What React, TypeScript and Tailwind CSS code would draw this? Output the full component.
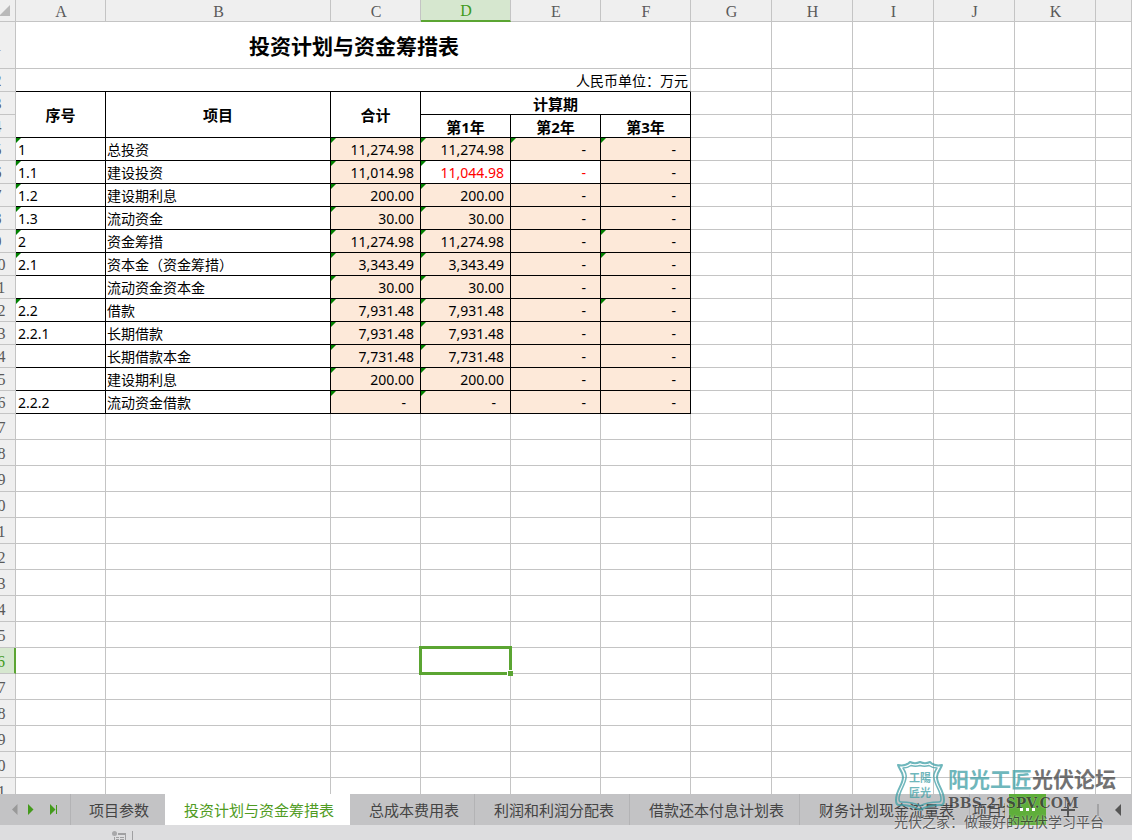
import { clsx } from 'clsx';

type Cell = {
  value: string;
  flagged?: boolean;
  plain?: boolean;
  red?: boolean;
};

type Line = {
  code: string;
  codeFlagged?: boolean;
  item: string;
  cells: Cell[];
};

const columns = ['A', 'B', 'C', 'D', 'E', 'F', 'G', 'H', 'I', 'J', 'K', ''];
const outerColumns = ['G', 'H', 'I', 'J', 'K', ''];

const flag = (value: string): Cell => ({ value, flagged: true });
const dash: Cell = { value: '-' };

const lines: Line[] = [
  { code: '1', codeFlagged: true, item: '总投资', cells: [flag('11,274.98'), flag('11,274.98'), flag('-'), flag('-')] },
  {
    code: '1.1',
    codeFlagged: true,
    item: '建设投资',
    cells: [
      flag('11,014.98'),
      { value: '11,044.98', flagged: true, plain: true, red: true },
      { value: '-', plain: true, red: true },
      dash,
    ],
  },
  { code: '1.2', codeFlagged: true, item: '建设期利息', cells: [flag('200.00'), flag('200.00'), dash, dash] },
  { code: '1.3', codeFlagged: true, item: '流动资金', cells: [flag('30.00'), flag('30.00'), dash, dash] },
  { code: '2', codeFlagged: true, item: '资金筹措', cells: [flag('11,274.98'), flag('11,274.98'), dash, flag('-')] },
  { code: '2.1', codeFlagged: true, item: '资本金（资金筹措）', cells: [flag('3,343.49'), flag('3,343.49'), dash, flag('-')] },
  { code: '', item: '流动资金资本金', cells: [flag('30.00'), flag('30.00'), dash, dash] },
  { code: '2.2', codeFlagged: true, item: '借款', cells: [flag('7,931.48'), flag('7,931.48'), dash, flag('-')] },
  { code: '2.2.1', item: '长期借款', cells: [flag('7,931.48'), flag('7,931.48'), dash, dash] },
  { code: '', item: '长期借款本金', cells: [flag('7,731.48'), flag('7,731.48'), dash, dash] },
  { code: '', item: '建设期利息', cells: [flag('200.00'), flag('200.00'), dash, dash] },
  { code: '2.2.2', item: '流动资金借款', cells: [flag('-'), flag('-'), dash, dash] },
];

const emptyRows = Array.from({ length: 15 }, (_, i) => i + 17);

const tabs = ['项目参数', '投资计划与资金筹措表', '总成本费用表', '利润和利润分配表', '借款还本付息计划表', '财务计划现金流量表'];

const gridCell = 'relative border-r border-b border-[#c4c4c4] p-0';
const boxCell = 'relative border-r border-b border-black p-0 pt-0.5';
const boxHead = 'border-r border-b border-black p-0 pt-px text-[15px] leading-5 font-bold';

const Flag = () => (
  <span className="absolute top-0 left-0 border-t-[5px] border-r-[5px] border-t-[#008000] border-r-transparent" />
);

const RowHeader = ({ n, active = false }: { n: number; active?: boolean }) => (
  <th
    scope="row"
    className={clsx(
      "border-b border-b-[#c4c4c4] p-0 pt-0.5 text-center font-['Liberation_Serif',serif] text-base leading-5 font-normal",
      active
        ? 'border-r-2 border-r-[#5ba532] bg-[#d6e7cf] text-[#3f9a1a]'
        : 'border-r border-r-[#c4c4c4] bg-[#efefef] text-[#5a5a5a]',
    )}
  >
    {n}
  </th>
);

const Outer = () => (
  <>
    {outerColumns.map((c) => (
      <td key={c} className={gridCell} />
    ))}
  </>
);

const Sheet = () => (
  <table className="w-full table-fixed border-separate border-spacing-0 text-sm leading-5 text-black">
    <colgroup>
      <col className="w-[36px]" />
      <col className="w-[90px]" />
      <col className="w-[225px]" />
      <col className="w-[90px]" />
      <col className="w-[90px]" />
      <col className="w-[90px]" />
      <col className="w-[90px]" />
      <col className="w-[81px]" />
      <col className="w-[81px]" />
      <col className="w-[81px]" />
      <col className="w-[81px]" />
      <col className="w-[81px]" />
      <col />
    </colgroup>
    <thead>
      <tr className="h-[22px]">
        <td className="relative border-r border-b border-[#c4c4c4] bg-[#efefef] p-0">
          <svg className="absolute right-[5px] bottom-[5px] h-[11px] w-[11px]" viewBox="0 0 11 11">
            <path d="M11 0v11H0z" fill="#b9b9b9" />
          </svg>
        </td>
        {columns.map((c) => (
          <th
            key={c}
            scope="col"
            className={clsx(
              "border-r border-r-[#c4c4c4] p-0 pt-px pl-px text-center font-['Liberation_Serif',serif] text-base leading-5 font-normal",
              c === 'D'
                ? 'border-b-2 border-b-[#5ba532] bg-[#d6e7cf] text-[#3f9a1a]'
                : 'border-b border-b-[#c4c4c4] bg-[#efefef] text-[#5a5a5a]',
            )}
          >
            <div className="h-[19px]">{c}</div>
          </th>
        ))}
      </tr>
    </thead>
    <tbody>
      <tr className="h-[47px]">
        <RowHeader n={1} />
        <td colSpan={6} className="border-r border-b border-[#c4c4c4] p-0 pt-0.5 pl-0.5 text-center text-[21px] leading-8 font-bold">
          投资计划与资金筹措表
        </td>
        <Outer />
      </tr>
      <tr className="h-[23px]">
        <RowHeader n={2} />
        <td colSpan={6} className="border-r border-b border-r-[#c4c4c4] border-b-black p-0 pt-0.5 pr-0.5 text-right">
          人民币单位：万元
        </td>
        <Outer />
      </tr>
      <tr className="h-[23px]">
        <RowHeader n={3} />
        <th rowSpan={2} className={boxHead}>序号</th>
        <th rowSpan={2} className={boxHead}>项目</th>
        <th rowSpan={2} className={boxHead}>合计</th>
        <th colSpan={3} className={boxHead}>计算期</th>
        <Outer />
      </tr>
      <tr className="h-[23px]">
        <RowHeader n={4} />
        <th className={boxHead}>第1年</th>
        <th className={boxHead}>第2年</th>
        <th className={boxHead}>第3年</th>
        <Outer />
      </tr>
      {lines.map((line, i) => (
        <tr key={i} className="h-[23px]">
          <RowHeader n={i + 5} />
          <td className={clsx(boxCell, 'pl-0.5')}>
            {line.codeFlagged ? <Flag /> : null}
            {line.code}
          </td>
          <td className={clsx(boxCell, 'pl-px')}>{line.item}</td>
          {line.cells.map((cell, j) => (
            <td
              key={j}
              className={clsx(
                boxCell,
                'text-right',
                cell.value === '-' ? 'pr-3.5' : 'pr-1.5',
                !cell.plain && 'bg-[#fde9d9]',
                cell.red && 'text-[#ff0000]',
              )}
            >
              {cell.flagged ? <Flag /> : null}
              {cell.value}
            </td>
          ))}
          <Outer />
        </tr>
      ))}
      {emptyRows.map((n) => (
        <tr key={n} className="h-[26px]">
          <RowHeader n={n} active={n === 26} />
          {columns.map((c) => (
            <td key={c} className={gridCell}>
              {n === 26 && c === 'D' ? (
                <div className="absolute -inset-0.5 z-10 border-[3px] border-[#5ba532]">
                  <span className="absolute -right-1 -bottom-1 h-1.5 w-1.5 border-t border-l border-white bg-[#5ba532]" />
                </div>
              ) : null}
            </td>
          ))}
        </tr>
      ))}
    </tbody>
  </table>
);

const TabBar = () => (
  <nav className="flex h-[31px] shrink-0 bg-[#c3c3c5] text-[15px] leading-5 text-[#444]">
    <div className="flex w-[71px] shrink-0 items-center border-r border-[#b3b3b5] pl-3">
      <button type="button" aria-label="上一个" className="mr-2.5">
        <svg className="h-[11px] w-1.5" viewBox="0 0 6 11">
          <path d="M5.5 0v11L0 5.5z" fill="#999" />
        </svg>
      </button>
      <button type="button" aria-label="下一个" className="mr-4">
        <svg className="h-[11px] w-1.5" viewBox="0 0 6 11">
          <path d="M0 0v11l5.500-5.500z" fill="#449a1c" />
        </svg>
      </button>
      <button type="button" aria-label="最后一个">
        <svg className="h-[11px] w-2" viewBox="0 0 8 11">
          <path d="M0 0v11l5.500-5.500zM6 1h1v9H6z" fill="#449a1c" />
        </svg>
      </button>
    </div>
    {tabs.map((tab, i) => (
      <button
        key={tab}
        type="button"
        className={clsx(
          'shrink-0 border-r pr-[15px] whitespace-nowrap',
          i === 0 ? 'pl-[18px]' : 'pl-[19px]',
          i === 1 && 'bg-white text-[#4f9b22]',
          i === 1 ? 'border-white' : i === 0 ? 'border-transparent' : 'border-[#b3b3b5]',
        )}
      >
        {tab}
      </button>
    ))}
    <button type="button" className="min-w-0 flex-1 pr-1 pl-0.5 text-left">
      <span className="block overflow-hidden whitespace-nowrap">项目投</span>
    </button>
    <button type="button" aria-label="更多工作表" className="flex w-[37px] shrink-0 items-center justify-center gap-[3px] bg-[#5fae3a]">
      <span className="h-[3px] w-[3px] bg-white" />
      <span className="h-[3px] w-[3px] bg-white" />
      <span className="h-[3px] w-[3px] bg-white" />
    </button>
    <button type="button" aria-label="新建工作表" className="flex w-[43px] shrink-0 items-center justify-center">
      <svg className="h-3.5 w-3.5" viewBox="0 0 14 14">
        <path d="M6 0h2v6h6v2H8v6H6V8H0V6h6z" fill="#555" />
      </svg>
    </button>
    <div className="flex w-[43px] shrink-0 items-center justify-end pr-[11px]">
      <span className="mr-4 h-3 w-0.5 bg-[#a3a3a5]" />
      <button type="button" aria-label="向左滚动">
        <svg className="h-3 w-1.5" viewBox="0 0 6 12">
          <path d="M6 0v12L0 6z" fill="#555" />
        </svg>
      </button>
    </div>
  </nav>
);

const StatusBar = () => (
  <footer className="flex h-[15px] shrink-0 items-end bg-[#dddddf] pl-28">
    <svg className="h-[9px] w-[21px]" viewBox="0 0 21 9">
      <circle cx="2.500" cy="2.500" r="2.500" fill="#a8a8aa" />
      <path d="M6 2h8v7h-1V4H6zM2 6h1v3H2zM4 6h3v1H4zM8 6h4v1H8zM4 8h3v1H4zM8 8h4v1H8zM20 0h1v9h-1z" fill="#a0a0a2" />
    </svg>
  </footer>
);

const Watermark = () => (
  <div className="pointer-events-none absolute right-[14px] bottom-2 w-56 opacity-75">
    <div className="flex h-[52px] items-start">
      <svg className="h-[52px] w-[52px] shrink-0" viewBox="0 0 52 52">
        <path
          d="M4 6c4 1 9 0 12-3 3 1.500 7 1.500 10 0 3 1.500 7 1.500 10 0 3 3 8 4 12 3-1 4-5 7-5 12 0 8 7 13 7 23 0 3-1 5-3 5-8 0-15 1-21 5-6-4-13-5-21-5-2 0-3-2-3-5 0-10 7-15 7-23 0-5-4-8-5-12z"
          fill="none"
          stroke="#3f9fa6"
          strokeWidth="2"
          strokeLinejoin="round"
        />
        <path
          d="M9 9c3 0 6-1 8-2.500 3 1 6 1 9 0 3 1 6 1 9 0 2 1.500 5 2.500 8 2.500-2 3-4 6-3 10 1 8 7 13 7 21 0 2-1 3-2 3-7 0-14 1-19 4-5-3-12-4-19-4-1 0-2-1-2-3 0-8 6-13 7-21 1-4-1-7-3-10z"
          fill="none"
          stroke="#3f9fa6"
          strokeWidth="1.500"
          strokeLinejoin="round"
        />
        <g fill="#3f9fa6" fontFamily="Noto Sans CJK SC, sans-serif" fontSize="11" fontWeight="700" textAnchor="middle">
          <text x="26" y="23">工陽</text>
          <text x="26" y="38">匠光</text>
        </g>
      </svg>
      <div className="flex flex-col pl-0.5">
        <div className="flex pt-1 text-[21px] leading-8 font-bold">
          <span className="text-[#3f9fa6]">阳光工匠</span>
          <span className="text-[#444]">光伏论坛</span>
        </div>
        <div className="font-['DejaVu_Serif',serif] text-sm leading-4 font-bold text-[#333] text-shadow-[0_0_1px_#fff]">BBS.21SPV.COM</div>
      </div>
    </div>
    <div className="pt-px text-[14px] leading-5 whitespace-nowrap text-[#333] text-shadow-[0_0_2px_#fff]">光伏之家：做最好的光伏学习平台</div>
  </div>
);

const App = () => (
  <div className="relative flex h-screen flex-col overflow-hidden bg-white font-['Noto_Sans','Noto_Sans_CJK_SC',sans-serif]">
    <main className="min-h-0 flex-1 overflow-hidden">
      {/* row headers are partly scrolled out on the left */}
      <div className="-ml-5">
        <Sheet />
      </div>
    </main>
    <TabBar />
    <StatusBar />
    <Watermark />
  </div>
);

export default App;
